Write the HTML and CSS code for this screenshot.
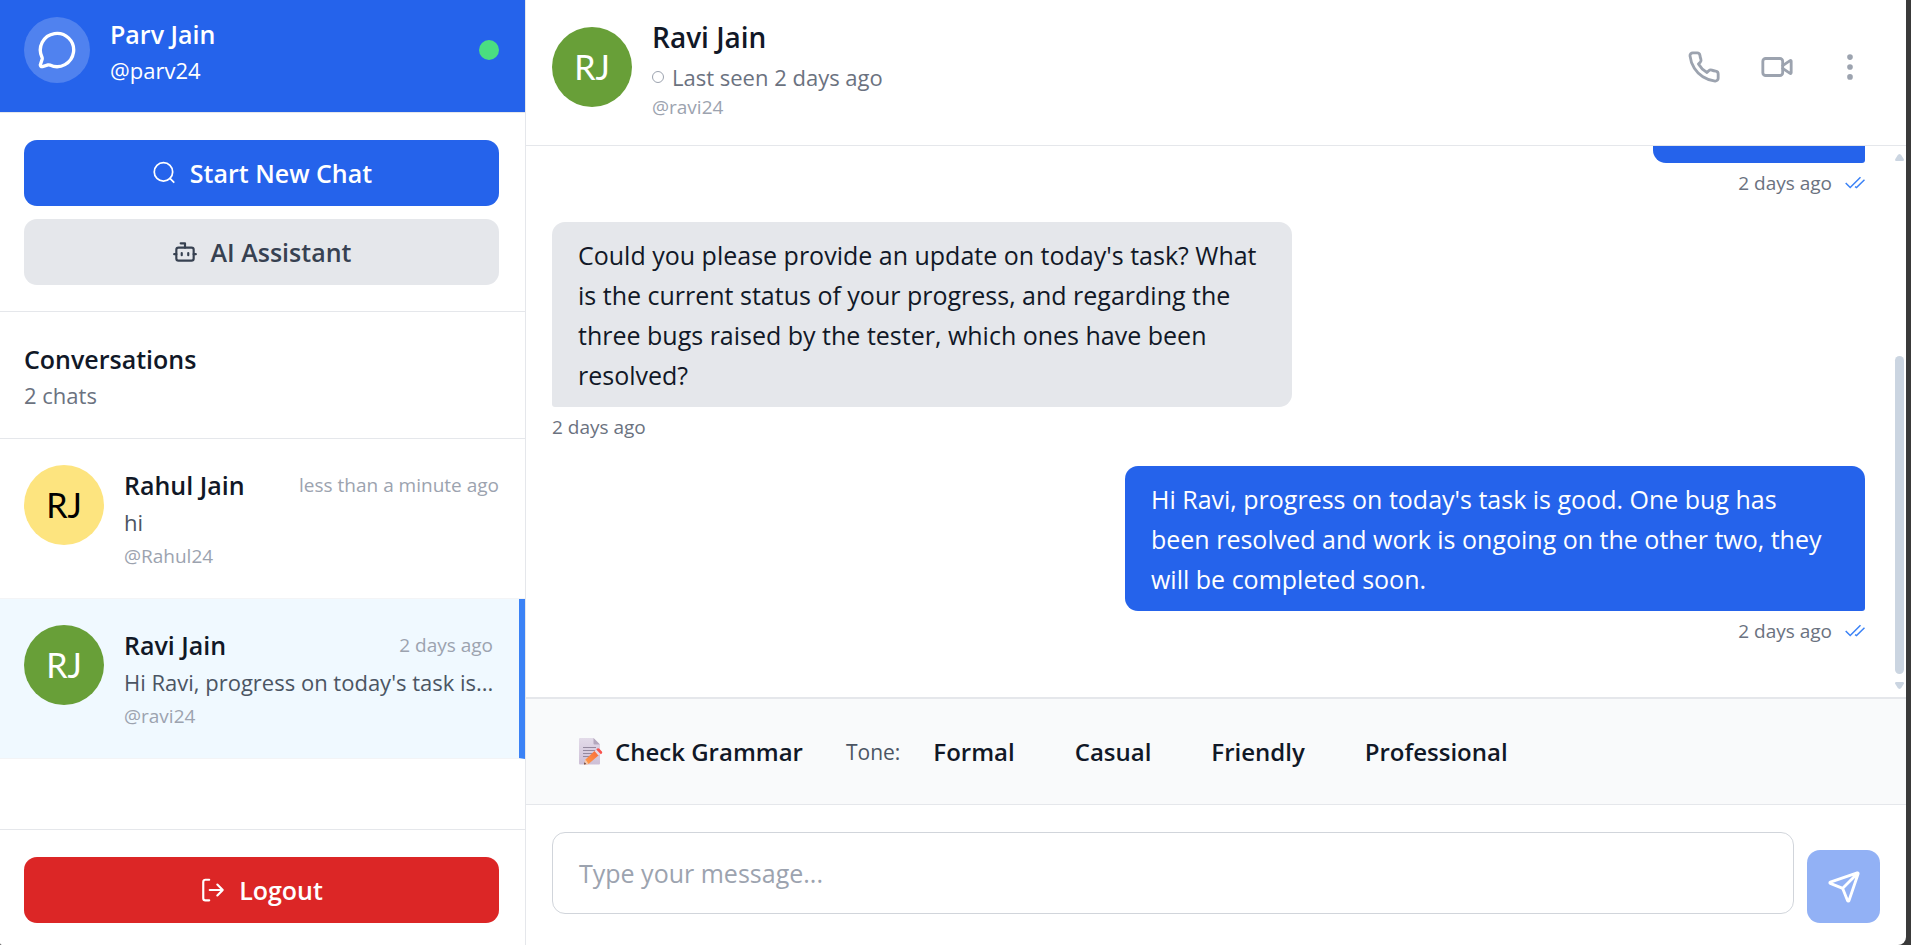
FILE: index.html
```html
<!DOCTYPE html>
<html lang="en">
<head>
<meta charset="utf-8">
<meta name="viewport" content="width=device-width, initial-scale=1">
<title>Chat</title>
<link rel="stylesheet" href="styles.css">
</head>
<body>
<div class="app">
  <aside class="sidebar">
    <header class="profile">
      <span class="profile-logo">
        <svg class="icon icon-lg" viewBox="0 0 24 24"><path d="M2.992 16.342a2 2 0 0 1 .094 1.167l-1.065 3.290a1 1 0 0 0 1.236 1.168l3.413-.998a2 2 0 0 1 1.099.092 10 10 0 1 0-4.777-4.719"/></svg>
      </span>
      <div class="profile-text">
        <h1 class="name">Parv Jain</h1>
        <p class="profile-handle">@parv24</p>
      </div>
      <span class="online-dot"></span>
    </header>
    <div class="actions">
      <button class="btn btn-primary" type="button">
        <svg class="icon icon-sm thin" viewBox="0 0 24 24"><circle cx="11.500" cy="11" r="8.500"/><path d="m21 20.500-3.500-3.500"/></svg>
        Start New Chat
      </button>
      <button class="btn btn-muted" type="button">
        <svg class="icon icon-sm" viewBox="0 0 24 24"><path d="M12 8V4H8"/><rect x="4" y="8" width="16" height="12" rx="2"/><path d="M2 14h2M20 14h2M15 13v2M9 13v2"/></svg>
        AI Assistant
      </button>
    </div>
    <div class="section-head">
      <h2 class="name">Conversations</h2>
      <p class="count">2 chats</p>
    </div>
    <ul class="chats">
      <li class="chat">
        <span class="avatar avatar-yellow">RJ</span>
        <div class="chat-body">
          <div class="chat-top"><h3 class="name">Rahul Jain</h3><time class="chat-time">less than a minute ago</time></div>
          <p class="preview">hi</p>
          <p class="handle">@Rahul24</p>
        </div>
      </li>
      <li class="chat chat-active">
        <span class="avatar avatar-green">RJ</span>
        <div class="chat-body">
          <div class="chat-top"><h3 class="name">Ravi Jain</h3><time class="chat-time">2 days ago</time></div>
          <p class="preview">Hi Ravi, progress on today's task is...</p>
          <p class="handle">@ravi24</p>
        </div>
      </li>
    </ul>
    <footer class="sidebar-foot">
      <button class="btn btn-danger" type="button">
        <svg class="icon icon-sm" viewBox="0 0 24 24"><path d="M8.500 21.500H5a2 2 0 0 1-2-2v-15a2 2 0 0 1 2-2h3.500M16 17l5-5-5-5M21 12H9"/></svg>
        Logout
      </button>
    </footer>
  </aside>

  <main class="main">
    <header class="chat-head">
      <span class="avatar avatar-green">RJ</span>
      <div class="head-text">
        <h2 class="head-name">Ravi Jain</h2>
        <p class="status"><span class="status-ring"></span>Last seen 2 days ago</p>
        <p class="head-handle">@ravi24</p>
      </div>
      <div class="head-tools">
        <button class="tool" type="button" aria-label="Voice call">
          <svg class="icon icon-md" viewBox="0 0 24 24"><path d="M22 16.920v3a2 2 0 0 1-2.180 2 19.790 19.790 0 0 1-8.630-3.070 19.500 19.500 0 0 1-6-6 19.790 19.790 0 0 1-3.070-8.670A2 2 0 0 1 4.110 2h3a2 2 0 0 1 2 1.720 12.840 12.840 0 0 0 .7 2.810 2 2 0 0 1-.45 2.110L8.090 9.910a16 16 0 0 0 6 6l1.270-1.270a2 2 0 0 1 2.110-.45 12.840 12.840 0 0 0 2.810.7A2 2 0 0 1 22 16.920z"/></svg>
        </button>
        <button class="tool" type="button" aria-label="Video call">
          <svg class="icon icon-md" viewBox="0 0 24 24"><rect x="2" y="6" width="14" height="12" rx="2"/><path d="m16 11 5.220-3.480a.5.5 0 0 1 .78.420v8.120a.5.5 0 0 1-.78.420L16 13"/></svg>
        </button>
        <button class="tool" type="button" aria-label="More options">
          <svg class="icon icon-md" viewBox="0 0 24 24"><circle cx="12" cy="12" r="1"/><circle cx="12" cy="5" r="1"/><circle cx="12" cy="19" r="1"/></svg>
        </button>
      </div>
    </header>

    <section class="stage">
      <div class="messages">
        <article class="message sent">
          <div class="bubble bubble-short"></div>
          <p class="meta">2 days ago
            <svg class="ticks" viewBox="0 0 20 14"><path d="M.7 7 5.200 11.500 15.500 1.200M10 10.700l1.500.9 8-7.800"/></svg></p>
        </article>
        <article class="message received">
          <p class="bubble">Could you please provide an update on today's task? What is the current status of your progress, and regarding the three bugs raised by the tester, which ones have been resolved?</p>
          <p class="meta">2 days ago</p>
        </article>
        <article class="message sent">
          <p class="bubble">Hi Ravi, progress on today's task is good. One bug has been resolved and work is ongoing on the other two, they will be completed soon.</p>
          <p class="meta">2 days ago
            <svg class="ticks" viewBox="0 0 20 14"><path d="M.7 7 5.200 11.500 15.500 1.200M10 10.700l1.500.9 8-7.800"/></svg></p>
        </article>
      </div>
      <div class="scrollbar">
        <svg class="arrow" viewBox="0 0 9 7"><path d="M4.500 0 6 .8 9 5.500 8.500 7h-8L0 5.500 3 .8z"/></svg>
        <div class="track"><div class="thumb"></div></div>
        <svg class="arrow" viewBox="0 0 9 7"><path d="M4.500 7 6 6.200 9 1.500 8.500 0h-8L0 1.500l3 4.700z"/></svg>
      </div>
    </section>

    <div class="tones">
      <button class="tone" type="button">
        <svg class="memo" viewBox="0 0 24 27">
          <defs>
            <linearGradient id="page" x1="0" y1="0" x2="0" y2="1"><stop offset="0" stop-color="#e3dbe9"/><stop offset="1" stop-color="#cdbfd6"/></linearGradient>
            <linearGradient id="pencil" x1="0" y1="1" x2="1" y2="0"><stop offset="0" stop-color="#ffa04a"/><stop offset="1" stop-color="#f9683a"/></linearGradient>
          </defs>
          <path d="M1 0h13.500l6.500 6.500V25.500a1 1 0 0 1-1 1H1a1 1 0 0 1-1-1V1a1 1 0 0 1 1-1z" fill="url(#page)"/>
          <path d="M14.500 0 21 6.500h-5.500a1 1 0 0 1-1-1z" fill="#b3a7bd"/>
          <path d="M4 9.500h13M4 12.500h13M4 15.500h10M4 18.500h6" stroke="#94899f" stroke-width="1"/>
          <path d="M5 26.500 6.500 21.500 16 12.500l4 4.500-10.500 9z" fill="url(#pencil)"/>
          <path d="M5 26.500 6.500 21.500l3 4.500z" fill="#f5c9b0"/>
          <path d="m5 26.500.6-2.200 1.500 1.600z" fill="#4a3440"/>
          <path d="m15.500 13 1.800-1.600 4 4.300-1.900 1.700z" fill="#e8d9e4"/>
          <path d="m17.300 11.400 1-.9q1.100-.8 2 .2l2.600 2.800q.8 1-.1 1.900l-1 .9z" fill="#f9524d"/>
        </svg>
        Check Grammar
      </button>
      <span class="tone-label">Tone:</span>
      <div class="tone-list">
        <button class="tone" type="button">Formal</button>
        <button class="tone" type="button">Casual</button>
        <button class="tone" type="button">Friendly</button>
        <button class="tone" type="button">Professional</button>
      </div>
    </div>

    <form class="composer">
      <textarea class="input" rows="1" placeholder="Type your message..." aria-label="Message"></textarea>
      <button class="send" type="button" aria-label="Send">
        <svg class="icon icon-md" viewBox="0 0 24 24"><path d="M14.540 21.690a.5.5 0 0 0 .94-.02l6.500-19a.5.5 0 0 0-.64-.64l-19 6.500a.5.5 0 0 0-.02.94l7.930 3.180a2 2 0 0 1 1.110 1.110zM21.850 2.150 10.910 13.080"/></svg>
      </button>
    </form>
  </main>
</div>
</body>
</html>
```

FILE: styles.css
```css
* { box-sizing: border-box; }

body {
  margin: 0;
  background: #3a3a3a;
  color: #111827;
  font: 25px/40px "Open Sans", "Noto Sans", sans-serif;
}

h1, h2, h3, p, ul { margin: 0; padding: 0; }
ul { list-style: none; }
button, textarea { font: inherit; color: inherit; border: 0; background: none; padding: 0; margin: 0; }
button { cursor: pointer; }

.app {
  display: flex;
  height: 100vh;
  margin-right: 5px;
  overflow: hidden;
  background: #fff;
  border-radius: 0 0 8px 2px;
}

.icon {
  flex: none;
  display: block;
  fill: none;
  stroke: currentColor;
  stroke-width: 2;
  stroke-linecap: round;
  stroke-linejoin: round;
}
.icon.thin { stroke-width: 1.6; }
.icon-sm { width: 26px; height: 26px; }
.icon-md { width: 34px; height: 34px; }
.icon-lg { width: 40px; height: 40px; }

.name { font-size: 25px; line-height: 40px; font-weight: 600; white-space: nowrap; }

/* Sidebar */
.sidebar {
  flex: none;
  display: flex;
  flex-direction: column;
  width: 526px;
  border-right: 1px solid #e5e7eb;
}
.profile {
  display: flex;
  align-items: center;
  gap: 20px;
  padding: 14px 26px 26px 24px;
  background: #2563eb;
  color: #fff;
}
.profile-logo {
  display: grid;
  place-items: center;
  width: 66px;
  height: 66px;
  border-radius: 50%;
  background: rgba(255, 255, 255, 0.2);
}
.profile-text { flex: 1; }
.profile-handle { font-size: 22px; line-height: 32px; }
.online-dot { width: 20px; height: 20px; border-radius: 50%; background: #4ade80; }

.actions {
  display: flex;
  flex-direction: column;
  gap: 13px;
  padding: 27px 26px 26px 24px;
  border-top: 1px solid #e5e7eb;
  border-bottom: 1px solid #e5e7eb;
}
.btn {
  display: flex;
  align-items: center;
  justify-content: center;
  gap: 13px;
  width: 100%;
  height: 66px;
  border-radius: 13px;
  font-size: 25px;
  font-weight: 600;
}
.btn-primary { background: #2563eb; color: #fff; }
.btn-muted { background: #e5e7eb; color: #374151; }
.btn-danger { background: #dc2626; color: #fff; }

.section-head { padding: 27px 26px 26px 24px; border-bottom: 1px solid #e5e7eb; }
.count { font-size: 22px; line-height: 33px; color: #6b7280; }

.chats { flex: 1; overflow: hidden; }
.chat {
  display: flex;
  gap: 20px;
  padding: 26px 26px 25px 24px;
  border-bottom: 1px solid #f3f4f6;
}
.chat-active { background: #f0f9ff; border-right: 6px solid #3b82f6; }
.chat-body { flex: 1; min-width: 0; }
.chat-top { display: flex; align-items: center; justify-content: space-between; }
.chat-time { font-size: 19px; color: #9ca3af; white-space: nowrap; }
.preview {
  font-size: 22px;
  line-height: 34px;
  color: #4b5563;
  white-space: nowrap;
}
.handle { font-size: 19px; line-height: 34px; color: #9ca3af; }

.avatar {
  flex: none;
  display: grid;
  place-items: center;
  width: 80px;
  height: 80px;
  border-radius: 50%;
  font-family: Lato, "Open Sans", sans-serif;
  font-size: 34px;
}
.avatar-yellow { background: #fde47f; color: #000; }
.avatar-green { background: #689f38; color: #fff; }

.sidebar-foot { padding: 27px 26px 22px 24px; border-top: 1px solid #e5e7eb; }

/* Conversation */
.main { flex: 1; min-width: 0; display: flex; flex-direction: column; }
.chat-head {
  display: flex;
  align-items: center;
  gap: 20px;
  padding: 15px 26px 26px;
  border-bottom: 1px solid #e5e7eb;
}
.head-text { flex: 1; }
.head-name { font-size: 28px; line-height: 44px; font-weight: 600; }
.status {
  display: flex;
  align-items: center;
  gap: 8px;
  font-size: 22px;
  line-height: 36px;
  color: #6b7280;
}
.status-ring { width: 12px; height: 12px; border: 1px solid #9ca3af; border-radius: 50%; }
.head-handle { font-size: 19px; line-height: 24px; color: #9ca3af; }
.head-tools { display: flex; gap: 13px; color: #9ca3af; }
.tool { display: grid; place-items: center; width: 60px; height: 60px; }

.stage { flex: 1; min-height: 0; display: flex; }
.messages {
  flex: 1;
  display: flex;
  flex-direction: column;
  justify-content: flex-end;
  gap: 25px;
  padding: 0 27px 52px 26px;
  overflow: hidden;
}
.message { display: flex; flex-direction: column; gap: 6px; max-width: 740px; }
.sent { align-self: flex-end; align-items: flex-end; }
.received { align-self: flex-start; align-items: flex-start; }
.bubble { padding: 13px 26px 12px; border-radius: 13px; }
.bubble-short { min-width: 212px; min-height: 65px; }
.sent .bubble { background: #2563eb; color: #fff; border-bottom-right-radius: 3px; }
.received .bubble { background: #e5e7eb; border-bottom-left-radius: 3px; }
.meta {
  display: flex;
  align-items: center;
  gap: 13px;
  font-size: 19px;
  line-height: 28px;
  color: #6b7280;
}
.ticks { width: 20px; height: 14px; fill: none; stroke: #3b82f6; stroke-width: 1.5; }

.scrollbar {
  display: flex;
  flex-direction: column;
  align-items: center;
  gap: 8px;
  width: 14px;
  padding: 8px 0;
}
.arrow { width: 9px; height: 7px; fill: #cbd5e1; }
.track { flex: 1; display: flex; align-items: flex-end; }
.thumb { width: 9px; height: 63%; border-radius: 5px; background: #cbd5e1; }

.tones {
  display: flex;
  align-items: center;
  padding: 20px 26px;
  border-top: 2px solid #e5e7eb;
  border-bottom: 1px solid #e5e7eb;
  background: #f9fafb;
}
.tone {
  display: flex;
  align-items: center;
  gap: 12px;
  height: 65px;
  padding: 0 27px;
  font-size: 24px;
  font-weight: 600;
}
.memo { width: 24px; height: 27px; }
.tone-label { margin: 0 6px 0 16px; font-size: 21px; color: #4b5563; }
.tone-list { display: flex; gap: 6px; }

.composer {
  display: flex;
  align-items: flex-start;
  gap: 13px;
  padding: 27px 26px 22px;
}
.input {
  flex: 1;
  height: 82px;
  padding: 20px 26px;
  border: 1px solid #d1d5db;
  border-radius: 13px;
  resize: none;
  overflow: hidden;
}
.input::placeholder { color: #9ca3af; opacity: 1; }
.send {
  align-self: flex-end;
  display: grid;
  place-items: center;
  width: 73px;
  height: 73px;
  margin-top: 18px;
  border-radius: 13px;
  background: #92b1f5;
  color: #fff;
}
```
